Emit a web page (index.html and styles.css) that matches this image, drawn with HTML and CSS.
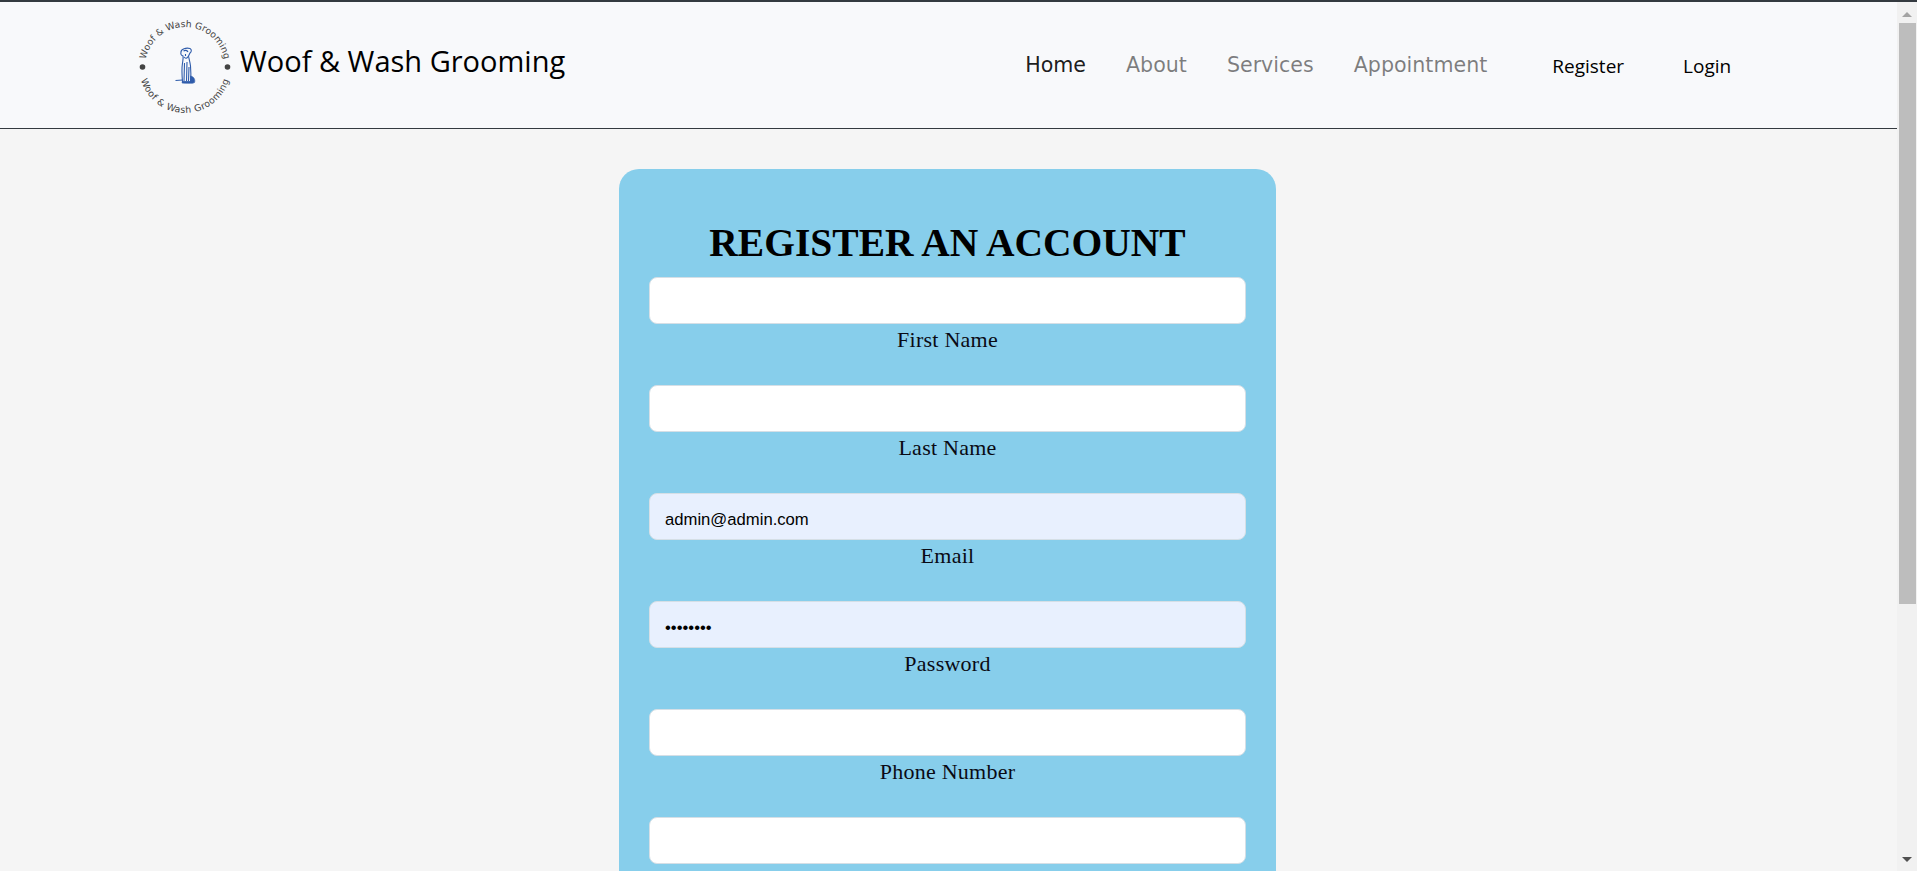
FILE: index.html
```html
<!DOCTYPE html>
<html>
<head>
  <title>Woof &amp; Wash Grooming</title>
  <meta charset="utf-8" />
  <link rel="stylesheet" href="styles.css">
</head>
<body>

  <div class="main">
    <header class="topbar">
      <a class="brand" href="#">
        <svg class="logo" viewBox="0 0 100 100" width="100" height="100">
          <defs>
            <path id="arcTop" d="M 10 50 A 40 40 0 0 1 90 50" />
            <path id="arcBottom" d="M 4 50 A 46 46 0 0 0 96 50" />
          </defs>
          <text class="logo-text"><textPath href="#arcTop" startOffset="50%" text-anchor="middle">Woof &amp; Wash Grooming</textPath></text>
          <text class="logo-text wide"><textPath href="#arcBottom" startOffset="50%" text-anchor="middle">Woof &amp; Wash Grooming</textPath></text>
          <circle class="logo-dot" cx="7.5" cy="50" r="2.8" />
          <circle class="logo-dot" cx="92.5" cy="50" r="2.8" />
          <g class="logo-dog">
            <path d="M46 35 C46 32 51 30.5 55 31.5 C57 32.5 56.5 35 55 36 L53.5 39 C54 42 55 45 55.5 49 C56 54 56 59 55.5 65 L47.5 65 C47 59 46.5 52 47.5 46 C48 43 48.5 41 48 39 C46.5 38.5 45.5 37 46 35 Z" />
            <path d="M48.5 34 C50 33 52 33 53 35 M49 40 C50.5 42 52 41.5 53 39.5 M49.5 46 L49 64 M52 45 L51.5 64 M54 50 L53.5 64 M50.5 39 L50.5 37" />
            <path d="M40.5 63.5 L47.5 63" />
            <path class="haunch" d="M55.5 59 C59 59.5 60.5 63 59.5 65.5 C58 66.5 55 66.5 47 66 L47.5 64.5 L55.5 64.5 Z" />
          </g>
        </svg>
        <span class="brand-name">Woof &amp; Wash Grooming</span>
      </a>

      <nav class="nav">
        <a class="nav-link active" href="#">Home</a>
        <a class="nav-link" href="#">About</a>
        <a class="nav-link" href="#">Services</a>
        <a class="nav-link" href="#">Appointment</a>
      </nav>

      <div class="account">
        <a href="#">Register</a>
        <a href="#">Login</a>
      </div>
    </header>

    <form class="card">
      <h1>REGISTER AN ACCOUNT</h1>

      <div class="field">
        <input type="text" id="firstName">
        <label for="firstName">First Name</label>
      </div>
      <div class="field">
        <input type="text" id="lastName">
        <label for="lastName">Last Name</label>
      </div>
      <div class="field">
        <input class="filled" type="email" id="email" value="admin@admin.com">
        <label for="email">Email</label>
      </div>
      <div class="field">
        <input class="filled" type="password" id="password" value="admin123">
        <label for="password">Password</label>
      </div>
      <div class="field">
        <input type="text" id="phone">
        <label for="phone">Phone Number</label>
      </div>
      <div class="field">
        <input type="text">
      </div>
    </form>
  </div>

  <div class="scrollbar">
    <span class="arrow up"></span>
    <div class="track"><div class="thumb"></div></div>
    <span class="arrow down"></span>
  </div>

</body>
</html>
```

FILE: styles.css
```css
* {
  box-sizing: border-box;
}

html, body {
  height: 100%;
  margin: 0;
  overflow: hidden;
}

body {
  display: flex;
  border-top: 2px solid #343a40;
  background-color: #f5f5f5;
  font-family: "Open Sans", "Liberation Sans", sans-serif;
  color: #000;
}

a {
  color: inherit;
  text-decoration: none;
}

.main {
  flex: 1;
  min-width: 0;
  overflow: hidden;
}

/* header */
.topbar {
  display: flex;
  align-items: center;
  height: 127px;
  padding-left: 135px;
  background-color: #f8f9fb;
  border-bottom: 1px solid #343a40;
}

.brand {
  display: flex;
  align-items: center;
  gap: 5px;
  margin-top: 3px;
}

.logo {
  overflow: visible;
}

.logo-text {
  font-family: "DejaVu Sans", sans-serif;
  font-size: 9.3px;
  fill: #444;
}

.logo-text.wide {
  letter-spacing: 0.4px;
}

.logo-dot {
  fill: #444;
}

.logo-dog path {
  fill: none;
  stroke: #2f5cab;
  stroke-width: 1.1;
}

.logo-dog .haunch {
  fill: #2f5cab;
  stroke-width: 0.6;
}

.brand-name {
  font-size: 29px;
  margin-top: -13px;
}

.nav {
  display: flex;
  gap: 40px;
  margin-left: 460px;
  font-family: "DejaVu Sans", sans-serif;
  font-size: 20.6px;
}

.nav-link {
  color: rgba(0, 0, 0, 0.5);
}

.nav-link.active {
  color: rgba(0, 0, 0, 0.9);
}

.account {
  display: flex;
  gap: 59px;
  margin-left: 65px;
  margin-top: 2px;
  font-size: 19px;
}

/* register form */
.card {
  width: 657px;
  margin: 40px 0 0 619px;
  padding: 46px 30px 40px;
  border-radius: 20px;
  background-color: #87ceeb;
  text-align: center;
}

.card h1 {
  margin: 0 0 6px;
  font-family: "Liberation Serif", serif;
  font-size: 39.5px;
  line-height: 56px;
  font-weight: 700;
}

.field {
  height: 108px;
}

.field input {
  display: block;
  width: 100%;
  height: 47px;
  padding: 7px 15px 0;
  border: 1px solid #d5dfe6;
  border-radius: 8px;
  outline: none;
  background-color: #fff;
  font-family: "Liberation Sans", sans-serif;
  font-size: 16.67px;
  color: #000;
}

.field input.filled {
  background-color: #e8f0fe;
}

.field label {
  display: block;
  margin-top: 1px;
  font-family: "Liberation Serif", serif;
  font-size: 22px;
  letter-spacing: 0.25px;
  line-height: 30px;
  color: #0a0a14;
}

/* scrollbar on the right */
.scrollbar {
  display: flex;
  flex-direction: column;
  width: 20px;
  background-color: #f1f1f1;
}

.arrow {
  flex: none;
  align-self: center;
  width: 0;
  height: 0;
  border-left: 5px solid transparent;
  border-right: 5px solid transparent;
}

.arrow.up {
  margin: 10px 0 6px;
  border-bottom: 5px solid #a3a3a3;
}

.arrow.down {
  margin: 6px 0 9px;
  border-top: 5px solid #505050;
}

.track {
  flex: 1;
  padding: 0 1px 0 2px;
}

.thumb {
  height: 581px;
  background-color: #bdbdbd;
}
```
